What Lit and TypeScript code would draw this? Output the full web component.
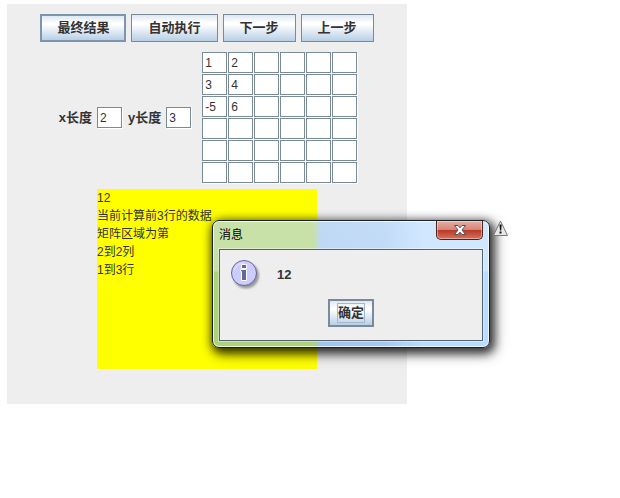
import { LitElement, html, css } from "lit";
import { customElement, state } from "lit/decorators.js";

const baseFont = css`"Liberation Sans", Arial, "Noto Sans CJK SC", sans-serif`;

const metalControls = css`
  * {
    box-sizing: border-box;
  }
  button {
    font: bold 13px/16px ${baseFont};
    color: #333;
    padding: 0;
  }
  .metal {
    height: 28px;
    padding: 0 16px;
    border: 1px solid #7a8a99;
    background: linear-gradient(#dde8f3 0%, #fff 30%, #fff 36%, #b8cfe5 100%);
    white-space: nowrap;
  }
`;

/** Glass-framed message window with a single confirm button. */
@customElement("message-window")
export class MessageWindow extends LitElement {
  static properties = { heading: {}, message: {} };
  declare heading: string;
  declare message: string;

  static styles = [
    metalControls,
    css`
      :host {
        display: block;
        font-family: ${baseFont};
      }
      .frame {
        border: 1px solid #182028;
        border-radius: 7px;
        padding: 0 6px 6px;
        box-shadow:
          inset 0 0 0 1px rgba(255, 255, 255, 0.75),
          2px 3px 10px 2px rgba(0, 0, 0, 0.75),
          4px 5px 14px 2px rgba(0, 0, 0, 0.3);
        background:
          linear-gradient(rgba(255, 255, 255, 0.35) 0, rgba(255, 255, 255, 0.3) 50px, transparent 51px),
          linear-gradient(90deg, #acd27c 0, #acd27c 100px, #a0c5ee 108px, #a4c9f1 170px, #b8dbff 210px);
      }
      .bar {
        display: flex;
        justify-content: space-between;
        height: 28px;
      }
      .title {
        margin: 0;
        font-size: 12px;
        font-weight: normal;
        line-height: 29px;
        color: #000;
      }
      .close {
        width: 47px;
        height: 19px;
        border: 1px solid #4b2420;
        border-top: 0;
        border-radius: 0 0 5px 5px;
        background: linear-gradient(#e5ada2 0, #d58576 48%, #b83a28 52%, #d9705a 100%);
        box-shadow: inset 0 0 0 1px rgba(255, 255, 255, 0.4);
        display: grid;
        place-items: center;
      }
      .body {
        border: 1px solid #53636f;
        background: #eee;
        padding: 10px 10px 13px;
        outline: 1px solid rgba(255, 255, 255, 0.4);
      }
      .content {
        display: flex;
        align-items: center;
        gap: 16px;
        margin-bottom: 9px;
      }
      .text {
        margin: 0;
        font: bold 13px/16px ${baseFont};
        color: #333;
      }
      .icon {
        display: block;
      }
      .ok {
        display: block;
        margin: 0 auto;
        padding: 0 8px;
        border-width: 2px;
      }
      .ok span {
        display: block;
        outline: 1px solid #a3b8cc;
        line-height: 18px;
      }
    `,
  ];

  render() {
    return html`
      <section class="frame" role="dialog" aria-labelledby="title">
        <header class="bar">
          <h2 class="title" id="title">${this.heading}</h2>
          <button class="close" aria-label="关闭">
            <svg width="14" height="12" viewBox="0 0 14 12" aria-hidden="true">
              <path
                d="M1.5 1.5H5L7 3.8 9 1.5h3.5L9 6l3.5 4.5H9L7 8.2 5 10.5H1.5L5 6Z"
                fill="#fff"
                stroke="#53505a"
                stroke-width="1"
              />
            </svg>
          </button>
        </header>
        <div class="body">
          <div class="content">
            <svg class="icon" width="31" height="30" viewBox="0 0 31 30" aria-hidden="true">
              <defs>
                <filter id="soft" x="-20%" y="-20%" width="140%" height="140%">
                  <feGaussianBlur stdDeviation="1.2" />
                </filter>
              </defs>
              <circle cx="16" cy="15.5" r="13" fill="#777" opacity="0.7" filter="url(#soft)" />
              <circle cx="14" cy="13" r="12.5" fill="#ccccff" stroke="#666699" />
              <path d="M4.5 10A10.5 10.5 0 0 1 14 3" fill="none" stroke="#e4e4ff" />
              <path
                d="M11.500 4.500h5v4h-5ZM10.500 9.500h6v11h-5v-9h-1Z"
                fill="#666699"
                stroke="#fff"
              />
            </svg>
            <p class="text">${this.message}</p>
          </div>
          <button class="metal ok"><span>确定</span></button>
        </div>
      </section>
    `;
  }
}

@customElement("app-root")
export class AppRoot extends LitElement {
  @state() private matrix = [
    ["1", "2", "", "", "", ""],
    ["3", "4", "", "", "", ""],
    ["-5", "6", "", "", "", ""],
    ["", "", "", "", "", ""],
    ["", "", "", "", "", ""],
    ["", "", "", "", "", ""],
  ];

  private log = ["12", "当前计算前3行的数据", "矩阵区域为第", "2到2列", "1到3行"].join("\n");

  static styles = [
    metalControls,
    css`
      :host {
        display: block;
        position: relative;
        min-height: 100vh;
        padding: 4px 7px;
        box-sizing: border-box;
        overflow: hidden;
        background: #fff;
        color: #333;
        font-family: ${baseFont};
      }
      .applet {
        display: flex;
        flex-direction: column;
        align-items: center;
        max-width: 400px;
        padding: 10px 0 35px;
        background: #eee;
      }
      .toolbar {
        display: flex;
        gap: 5px;
        margin-bottom: 10px;
      }
      .primary {
        padding: 0 15px;
        border: 2px solid #7b96ae;
      }
      .inputs {
        display: flex;
        align-items: center;
        gap: 5px;
        margin-bottom: 5px;
        padding-left: 3px;
      }
      label {
        font: bold 13px/16px ${baseFont};
      }
      .field {
        width: 25px;
        height: 21px;
        margin: 0 1px 1px 0;
        padding: 0 0 0 2px;
        border: 1px solid #7a8a99;
        border-radius: 0;
        background: #fff;
        box-shadow: 1px 1px #fff;
        color: #333;
        font: 12px/18px ${baseFont};
      }
      .matrix {
        display: grid;
        grid-template-columns: repeat(6, auto);
        margin-left: 5px;
      }
      .log {
        display: block;
        width: 220px;
        height: 180px;
        padding: 0;
        border: 0;
        resize: none;
        overflow: hidden;
        background: #ff0;
        color: #333;
        font: 12px/18px ${baseFont};
      }
      .popup {
        position: absolute;
        left: 212px;
        top: 220px;
        width: 278px;
      }
      .warning {
        position: absolute;
        left: 492px;
        top: 219px;
      }
    `,
  ];

  render() {
    return html`
      <main class="applet">
        <div class="toolbar">
          <button class="metal primary">最终结果</button>
          <button class="metal">自动执行</button>
          <button class="metal">下一步</button>
          <button class="metal">上一步</button>
        </div>
        <div class="inputs">
          <label for="x-length">x长度</label>
          <input class="field" id="x-length" value="2" />
          <label for="y-length">y长度</label>
          <input class="field" id="y-length" value="3" />
          <div class="matrix">
            ${this.matrix.map((row, r) =>
              row.map(
                (cell, c) => html`<input class="field" aria-label="${r + 1}行${c + 1}列" .value=${cell} />`,
              ),
            )}
          </div>
        </div>
        <textarea class="log" aria-label="计算过程" readonly .value=${this.log}></textarea>
      </main>
      <message-window class="popup" heading="消息" message="12"></message-window>
      <svg class="warning" width="17" height="18" viewBox="0 0 17 18" aria-hidden="true">
        <path
          d="M8.5 2 15.5 16.5H1.5Z"
          fill="#e8e8e8"
          stroke="#777"
          stroke-linejoin="round"
        />
        <path d="M7.5 5.5h2.200l-.5 6H8ZM7.500 12.500h2v2h-2Z" fill="#111" />
      </svg>
    `;
  }
}
